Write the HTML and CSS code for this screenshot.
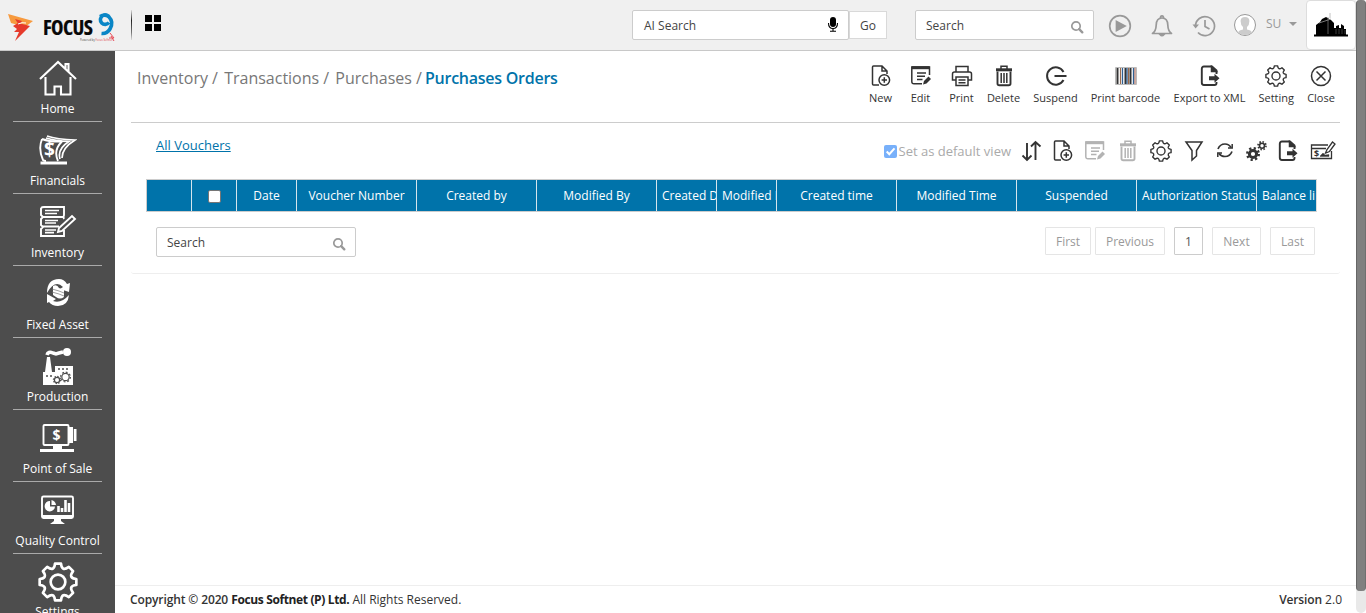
FILE: index.html
```html
<!DOCTYPE html>
<html lang="en">
<head>
<meta charset="utf-8">
<title>Purchases Orders</title>
<link rel="stylesheet" href="styles.css">
</head>
<body>
<svg class="sprite" aria-hidden="true">
  <symbol id="gear" viewBox="-12 -12 24 24"><path d="M-1.8-11H1.8Q2-8.500 3.200-7.960Q4.400-7.500 6.500-9.050L9.050-6.500Q7.500-4.400 7.960-3.200Q8.500-2 11-1.800V1.800Q8.500 2 7.960 3.200Q7.500 4.400 9.050 6.500L6.500 9.050Q4.400 7.500 3.200 7.960Q2 8.500 1.800 11H-1.800Q-2 8.500-3.200 7.960Q-4.400 7.500-6.500 9.050L-9.050 6.500Q-7.500 4.400-7.960 3.200Q-8.500 2-11 1.800V-1.800Q-8.500-2-7.960-3.200Q-7.500-4.400-9.050-6.500L-6.500-9.050Q-4.400-7.500-3.200-7.960Q-2-8.500-1.800-11Z" stroke-linejoin="round"/><circle r="4.4"/></symbol>
  <symbol id="new" viewBox="0 0 20 22"><path d="M8 20H2.500Q1.500 20 1.500 19V2Q1.500 1 2.500 1H11L16 6V9M11 1V6H16"/><circle cx="13.300" cy="15" r="5.300"/><path d="M13.300 12.300V17.700M10.600 15H16"/></symbol>
  <symbol id="edit" viewBox="0 0 22 22"><path d="M12 18.800H4Q1.800 18.800 1.800 16.500V2H19.500V10"/><path d="M1.800 2.700H19.500" stroke-width="3"/><path d="M7 8H16M7 11.200H15M7 14.400H12.500"/><path d="M13 19.500L14 16L18.500 11.500L21 14L16.500 18.500Z" fill="currentColor" stroke="none"/></symbol>
  <symbol id="trash" viewBox="0 0 20 22"><path d="M2 4.800H18" stroke-width="3"/><path d="M7 4V1.300H13V4"/><path d="M3.500 6.500V18.500Q3.500 20.300 5.300 20.300H14.700Q16.500 20.300 16.500 18.500V6.500" stroke-width="1.900"/><path d="M7.200 8V18M10 8V18M12.800 8V18"/></symbol>
  <symbol id="export" viewBox="0 0 20 22"><path d="M16.500 9V5.500L12 1.500H4Q1.800 1.500 1.800 3.700V17.800Q1.800 20 4 20H14.500Q16.500 20 16.500 18V17" stroke-width="1.900"/><path d="M11.500 1.500L16.500 6.500H11.500Z" fill="currentColor"/><path d="M9 11.300H14.500V8.800L19.500 13.300L14.500 17.700V15.200H9Z" fill="currentColor" stroke="none"/></symbol>
  <symbol id="search" viewBox="0 0 14 14"><circle cx="6" cy="6" r="4.200"/><path d="M9.200 9.200L12.300 12.300" stroke-width="2.400" stroke-linecap="round"/></symbol>
</svg>
<div class="window">
  <div class="app">
    <header class="topbar">
      <svg class="logo" width="110" height="36" viewBox="0 0 110 36">
        <path d="M0 5L25 12L17 18L3 14Z" fill="#f79a3e"/><path d="M5 17L10 14L22 17L7 32L11 23H6L9 20Z" fill="#e63a2b"/><path d="M7 10L14 12L11 16Z" fill="#e63a2b"/><path d="M10 15Q14 13 18 14" stroke="#fff" fill="none"/>
        <text class="logo-word" x="35" y="25.500" textLength="50" lengthAdjust="spacing">FOCUS</text>
        <path d="M101 13.500A4.800 4.800 0 1 1 101.500 8.500M92 7.500Q97 4.500 101 8Q106 13 102 20Q99 25 93.500 24.500" fill="none" stroke="#0a86c6" stroke-width="3.600"/>
        <path d="M102 24L106 29L101 29M103 27L106 32" stroke="#e84b55" fill="none"/>
        <text class="logo-tag" x="72" y="32">Powered by<tspan fill="#e0424c"> Focus Softnet</tspan></text>
      </svg>
      <i class="logo-rule"></i>
      <div class="apps"><i></i><i></i><i></i><i></i></div>
      <label class="field ai"><span>AI Search</span>
        <svg width="14" height="18" viewBox="0 0 14 18"><rect x="4" y="1" width="6" height="10" rx="3"/><path d="M2.500 7Q2.500 12.500 7 12.500Q11.500 12.500 11.500 7M7 12.500V15M4 15.200H10" fill="none" stroke="#000" stroke-width="1.100"/></svg>
      </label>
      <button class="go">Go</button>
      <label class="field global"><span>Search</span><svg class="line mag" width="14" height="14"><use href="#search"/></svg></label>
      <nav class="tools">
        <svg width="24" height="24" viewBox="0 0 24 24"><circle cx="12" cy="12" r="10.300"/><path d="M8.500 7.500L17 12L8.500 16.500Z" fill="#999"/></svg>
        <svg width="22" height="24" viewBox="0 0 22 24"><path d="M1.500 19.500Q5 17 5.200 11Q5.400 4 11 4Q16.600 4 16.800 11Q17 17 20.500 19.500Z" stroke-linejoin="round"/><path d="M9.500 4Q9.500 1.800 11 1.800Q12.500 1.800 12.500 4"/><path d="M9 20.500Q11 23 13 20.500Z" fill="#999"/></svg>
        <svg width="24" height="24" viewBox="0 0 24 24"><path d="M3.500 12A9.500 9.500 0 1 1 6 18.500M13 6V12.500L17.500 15"/><path d="M0.500 10.500H7L3.600 14.500Z" fill="#999" stroke="none"/></svg>
      </nav>
      <svg class="avatar" width="24" height="24" viewBox="0 0 24 24"><circle cx="12" cy="12" r="10.500" fill="#fff" stroke="#999"/><path d="M5 19.500Q6 17.200 10 16.500V14Q7.600 12 7.600 8Q7.700 4 12 4Q16.300 4 16.400 8Q16.400 12 14 14V16.500Q18 17.200 19 19.500Q16 22 12 22Q8 22 5 19.500Z" fill="#ccc"/></svg>
      <span class="user">SU</span><i class="caret"></i>
      <div class="company"><svg width="34" height="26" viewBox="0 0 34 26"><path d="M2 23V13L6 10L8 7L12 5L17 8L20 11V16H22V14L25 13V16H27V12L30 14V17H32V23Z"/><path d="M0 23.500H34" stroke="#000" stroke-width="2"/><path d="M5 11L17 7" stroke="#aaa" stroke-width=".7"/><path d="M14 5V22M16 1V6" stroke="#999" stroke-width=".6"/><path d="M22 17V22M25 17V22M28 17V22M31 18V22" stroke="#777" stroke-width=".5"/></svg></div>
    </header>
    <div class="body">
      <aside class="sidebar">
        <a><svg class="home" width="38" height="38" viewBox="0 0 38 38"><path d="M1 20L19 3L37 20M26.500 10V5H29.500V13M6.500 18V35.500H15.500V27.500H22V35.500H31.500V18"/></svg><span>Home</span></a>
        <a><svg width="38" height="38" viewBox="0 0 38 38"><path d="M3 8Q-1 18 4 29Q5 30 7 30M3 8Q11 11 23 10.500M23 10.500Q14 19 19 30"/><path d="M8 5Q18 8.500 36 9Q23 17 23 27M7 7Q16 10 30 10.500Q18 18 21 28" stroke-width="1.700"/><path d="M1.500 32H28" stroke-width="3"/><text x="5" y="25" class="money">$</text></svg><span>Financials</span></a>
        <a><svg width="38" height="38" viewBox="0 0 38 38"><path d="M2 5Q3 4 5 4H25V12Q24 14 25 16M2 5V12L4 14L2 16V22L4 24L2 26V33H25V27M3 14H25M3 23.500H20"/><path d="M6 7.500H20M6 10.500H18M6 17.500H19M6 20H17M6 27H17M6 29.700H15" stroke-width="1.700"/><path d="M19 29L20 25L33 13L36 16L23 28Z"/></svg><span>Inventory</span></a>
        <a><svg width="38" height="38" viewBox="0 0 38 38"><path d="M8 18Q8 4 20 4Q25 4 28 9L31 8L30 17L21 14L24 12Q16 4 8 18Z" fill="#fff" stroke="none"/><path d="M30 20Q29 31 19 31Q13 31 10 27L8 28L8 19L17 24L14 26Q22 29 30 20Z" fill="#fff" stroke="none"/><path d="M14 11Q18 9 20 13L25 15V22Q21 25 17 22L14 20Z" fill="#fff" stroke="none"/><path d="M13 14L20 16L25 18M13 17L20 19L25 21" stroke="#777" stroke-width=".7"/></svg><span>Fixed Asset</span></a>
        <a><svg width="38" height="38" viewBox="0 0 38 38"><path d="M4 25H6L8 10H11L13 25H16V19H34V38H4Z" fill="#fff" stroke="none"/><path d="M8 8Q9 4 14 6L17 7L20 6L24 5" stroke-width="3.500"/><circle cx="28" cy="5" r="4" fill="#fff" stroke="none"/><path d="M7 29H14M19 22H31" stroke="#4d4d4d" stroke-width="1.300" stroke-dasharray="2 2"/><g stroke="#4d4d4d" stroke-width="1.200" fill="none"><circle cx="18" cy="33" r="2.600"/><circle cx="18" cy="33" r="3.600" stroke-dasharray="1.400 1.400"/><circle cx="26.500" cy="30" r="3.700"/><circle cx="26.500" cy="30" r="4.900" stroke-dasharray="1.900 1.900"/></g></svg><span>Production</span></a>
        <a><svg width="38" height="38" viewBox="0 0 38 38"><rect x="4.500" y="6" width="25" height="20" rx="1"/><path d="M14 27H23V31H14ZM1 30H35V33H1ZM30 8H34V24H30ZM34.800 10H37.500V22H34.800Z" fill="#fff" stroke="none"/><text x="13.500" y="21" class="coin">$</text></svg><span>Point of Sale</span></a>
        <a><svg width="38" height="38" viewBox="0 0 38 38"><rect x="3" y="5.500" width="31" height="21.500" rx="1.500"/><path d="M3 25.500H34" stroke-width="3"/><path d="M15 28H22V30L26 33H11L15 30Z" fill="#fff" stroke="none"/><path d="M11 10A5.200 5.200 0 1 0 16 15.500H11Z" fill="#fff" stroke="none"/><path d="M12.500 9V14H17Q16.500 10 12.500 9Z" fill="#fff" stroke="none"/><path d="M19.500 21V15M23 21V17M26.500 21V9M30 21V12" stroke-width="2.600"/></svg><span>Quality Control</span></a>
        <a><svg class="settings" width="40" height="40"><use href="#gear"/></svg><span>Settings</span></a>
      </aside>
      <main class="content">
        <section class="heading">
          <h1>Inventory / <span>Transactions /</span> <span>Purchases</span> /<b>Purchases Orders</b></h1>
          <nav class="actions">
            <a><svg width="20" height="22"><use href="#new"/></svg>New</a>
            <a><svg width="22" height="22"><use href="#edit"/></svg>Edit</a>
            <a><svg width="22" height="22" viewBox="0 0 22 22"><path d="M5 7V1.500H17V7M4.500 15H1.500V9Q1.500 7 3.500 7H18.500Q20.500 7 20.500 9V15H17.500M5 12H17V20.500H5ZM7.500 15H14.500M7.500 17.700H14.500"/></svg>Print</a>
            <a><svg width="20" height="22"><use href="#trash"/></svg>Delete</a>
            <a><svg width="22" height="22" viewBox="0 0 22 22"><path d="M18.500 7A8.700 8.700 0 1 0 18.500 15M9.500 11H21.500" stroke-width="2"/></svg>Suspend</a>
            <a><svg width="22" height="22" viewBox="0 0 22 22"><path d="M.5 2.500H21.500V19.500H.5Z" stroke="#bbb" stroke-width="1"/><path d="M2.500 3V19M10.500 3V19M15.500 3V19" stroke="#333" stroke-width="2"/><path d="M5.500 3V19M13.500 3V19" stroke="#9a6a4c" stroke-width="1.200"/><path d="M7.500 3V19M12 3V19M18.500 3V19" stroke="#2f5f92" stroke-width="1.300"/><path d="M20 3V19" stroke="#995443" stroke-width="1"/></svg>Print barcode</a>
            <a><svg width="20" height="22"><use href="#export"/></svg>Export to XML</a>
            <a><svg width="22" height="22"><use href="#gear"/></svg>Setting</a>
            <a><svg width="22" height="22" viewBox="0 0 22 22"><circle cx="11" cy="11" r="9.500"/><path d="M6.500 6.500L15.500 15.500M15.500 6.500L6.500 15.500"/></svg>Close</a>
          </nav>
        </section>
        <section class="card">
          <div class="views">
            <a class="all">All Vouchers</a>
            <span class="default"><i><svg width="13" height="13" viewBox="0 0 13 13"><path d="M2.700 6.500L5.300 9.200L10.500 3.300"/></svg></i>Set as default view</span>
            <nav class="icons">
              <a><svg width="22" height="22" viewBox="0 0 22 22"><path d="M6 3V20M1.500 15.500L6 20L10.500 15.500M14.500 20V2M10 6.500L14.500 2L19.500 6.500" stroke-width="1.900"/></svg></a>
              <a><svg width="20" height="22"><use href="#new"/></svg></a>
              <a class="off"><svg width="22" height="22"><use href="#edit"/></svg></a>
              <a class="off"><svg width="20" height="22"><use href="#trash"/></svg></a>
              <a><svg width="22" height="22"><use href="#gear"/></svg></a>
              <a><svg width="20" height="22" viewBox="0 0 20 22"><path d="M2 2H18L12.500 10.500V16L8 20V10.500Z"/></svg></a>
              <a><svg width="18" height="22" viewBox="0 0 18 22"><path d="M2 9Q4 4 9 4Q13 4 15 7.500M16 11.500Q14 16.500 9 16.500Q5 16.500 3 13.500" stroke-width="1.700"/><path d="M12 8H16.200V4M6 13H1.800V17" /></svg></a>
              <a><svg width="22" height="22" viewBox="0 0 22 22"><circle cx="8" cy="14" r="3.600" stroke-width="3"/><circle cx="8" cy="14" r="5.800" stroke-width="2.400" stroke-dasharray="2.200 2.355"/><circle cx="17" cy="5.700" r="2.500" stroke-width="1.600"/><circle cx="17" cy="5.700" r="4" stroke-width="1.600" stroke-dasharray="1.500 1.640"/></svg></a>
              <a><svg width="20" height="22"><use href="#export"/></svg></a>
              <a><svg width="26" height="22" viewBox="0 0 26 22"><path d="M18 5H1.500V18.500H21.500V11M1.500 8.500H16" stroke-width="1.300"/><path d="M15.500 13L17 9.500L22.500 2L25 4L19.500 11.500Z" stroke-width="1.300"/><path d="M10 16L13 13L15 15L19 14.500V16.500H10" fill="currentColor" stroke-width=".4"/><text x="4" y="16.500" class="cheque">$</text></svg></a>
            </nav>
          </div>
          <div class="grid">
            <div></div><div><i class="box"></i></div><div>Date</div><div>Voucher Number</div><div>Created by</div><div>Modified By</div><div class="cut">Created Date</div><div class="cut">Modified Date</div><div>Created time</div><div>Modified Time</div><div>Suspended</div><div class="cut">Authorization Status</div><div class="cut">Balance linked</div>
          </div>
          <div class="below">
            <label class="field filter"><span>Search</span><svg class="line mag" width="14" height="14"><use href="#search"/></svg></label>
            <nav class="pager"><a class="first">First</a><a class="prev">Previous</a><a class="page">1</a><a class="next">Next</a><a class="last">Last</a></nav>
          </div>
        </section>
        <footer class="footer"><span><b class="med">Copyright © 2020</b> <b>Focus Softnet (P) Ltd.</b> All Rights Reserved.</span><span><b class="med">Version</b> 2.0</span></footer>
      </main>
    </div>
  </div>
  <div class="scroll"><i></i></div>
</div>
</body>
</html>
```
FILE: styles.css
```css
* { box-sizing: border-box; }
body { margin: 0; font: 12px/18px "Open Sans", "Noto Sans", sans-serif; color: #333; background: #fff; overflow: hidden; }
svg { display: block; flex: none; }
i { display: block; flex: none; font-style: normal; }
.sprite { position: absolute; width: 0; height: 0; }
.window { display: flex; height: 613px; overflow: hidden; }
.app { display: flex; flex-direction: column; width: 1356px; height: 613px; }
.scroll { width: 10px; background: #e9e9e9; border-radius: 5px; }
.scroll i { height: 591px; background: #808080; border-left: 1px solid #666; border-right: 1px solid #707070; border-radius: 4px; }

/* Top bar */
.topbar { display: flex; align-items: flex-start; height: 51px; flex: none; background: #f0f0f0; border-bottom: 1px solid #c8c8c8; padding-left: 8px; }
.logo { margin-top: 9px; }
.logo-word { font: 700 21px "Open Sans", sans-serif; font-stretch: 75%; fill: #080808; stroke: #080808; stroke-width: .2px; }
.logo-tag { font: 2.700px "Open Sans", sans-serif; fill: #444; }
.logo-rule { width: 1px; height: 30px; margin: 10px 0 0 13px; background: linear-gradient(#ddd, #222 35%, #777 75%, #ddd); }
.apps { display: grid; grid-template-columns: 7px 7px; grid-auto-rows: 7px; gap: 2px; margin: 15px 0 0 13px; }
.apps i { background: #000; }
.field { display: flex; align-items: center; justify-content: space-between; height: 30px; padding: 1px 9px 0 10px; background: #fff; border: 1px solid #ccc; border-radius: 2px; color: #444; }
.field span { padding-top: 1px; }
.ai { width: 217px; margin: 10px 0 0 471px; padding: 0 8px 0 11px; }
.ai span { padding-top: 2px; }
.go { width: 38px; height: 28px; margin-top: 11px; padding: 2px 0 0; border: 1px solid #d9d9d9; background: #fff; color: #444; font: inherit; }
.global { width: 179px; margin: 10px 0 0 28px; }
.line, .tools svg { fill: none; stroke: #999; stroke-width: 1.700; }
.mag { position: relative; top: 1px; }
.tools { display: flex; gap: 19px; margin: 14px 0 0 14px; }
.avatar { margin: 13px 0 0 17px; }
.user { margin: 15px 0 0 9px; color: #999; }
.caret { margin: 22px 0 0 8px; border: 4px solid transparent; border-top-color: #999; border-bottom: 0; }
.company { display: flex; align-items: center; justify-content: center; width: 50px; height: 50px; margin-left: auto; border: 1px solid #ddd; border-radius: 4px; background: #fff; }

/* Sidebar */
.body { display: flex; flex: 1; min-height: 0; }
.sidebar { width: 115px; flex: none; overflow: hidden; background: #4d4d4d; color: #fff; }
.sidebar a { display: flex; flex-direction: column; align-items: center; height: 72px; margin: 0 13px; padding-top: 9px; border-bottom: 1px solid #aaa; font-size: 12px; white-space: nowrap; }
.sidebar a:first-child { height: 71px; padding-top: 8px; }
.sidebar svg { fill: none; stroke: #fff; stroke-width: 1.900; }
.sidebar .home { stroke-width: 2.100; }
.sidebar .settings { stroke-width: 1.600; }
.sidebar span { margin-top: 3px; }
.sidebar a:last-child { padding-top: 8px; }
.sidebar a:last-child span { margin-top: 1px; }
.money { font: 700 19px "Open Sans", sans-serif; fill: #fff; stroke: none; }
.coin { font: 700 14px "Open Sans", sans-serif; fill: #fff; stroke: none; }

/* Page heading */
.content { display: flex; flex-direction: column; flex: 1; min-width: 0; }
.heading { display: flex; justify-content: space-between; height: 72px; margin: 0 16px 0 16px; padding-left: 6px; border-bottom: 1px solid #ccc; }
h1 { margin: 16px 0 0; font-size: 16px; font-weight: 400; line-height: 22px; color: #777; white-space: pre; }
h1 span { margin-left: 2px; }
h1 b { margin-left: 3px; color: #0073aa; font-weight: 600; letter-spacing: -.25px; }
.actions { display: grid; grid-template-columns: 36px 44px 38px 46px 58px 82px 86px 47.500px 42px; margin-right: -2px; padding-top: 14px; font-size: 11px; white-space: nowrap; }
.actions a { display: flex; flex-direction: column; align-items: center; gap: 2px; }
.actions svg, .icons svg { fill: none; stroke: currentColor; stroke-width: 1.500; }

/* Voucher list */
.card { height: 151px; margin: 0 16px; border-bottom: 1px solid #eee; border-radius: 3px; }
.views { display: flex; height: 56px; padding-left: 25px; }
.all { margin-top: 13px; font-size: 13px; color: #0073aa; text-decoration: underline; text-underline-offset: 1px; }
.default { display: flex; align-items: center; gap: 2px; height: 20px; margin: 18px 4px 0 auto; font-size: 13px; color: #aaa; white-space: nowrap; }
.default i { width: 13px; height: 13px; border-radius: 2px; background: #78b0fa; }
.default path { fill: none; stroke: #fff; stroke-width: 2; }
.icons { display: grid; grid-template-columns: 34px 28px 36px 30px 36px 30px 32px 30px 34px 35px; height: 22px; margin-top: 17px; }
.icons a { display: flex; justify-content: center; }
.off { color: #b3b3b3; }
.cheque { font: 700 9px "Open Sans", sans-serif; fill: #333; stroke: none; }
.grid { display: grid; grid-template-columns: 45px 45px 60px 120px 120px 120px 60px 60px 120px 120px 120px 120px 60px; width: 1171px; height: 33px; margin-left: 15px; overflow: hidden; border: 1px solid #ccc; border-right-color: #ddd; color: #fff; background: #0073aa; }
.grid div { display: flex; align-items: center; justify-content: center; min-width: 0; overflow: hidden; padding-top: 1px; border-right: 1px solid #d5e5ed; font-size: 12px; white-space: nowrap; }
.grid .cut { justify-content: flex-start; padding-left: 5px; }
.box { width: 13px; height: 13px; background: #fff; border: 1px solid #767676; border-radius: 2px; }
.below { display: flex; justify-content: space-between; padding: 15px 25px 0 25px; }
.filter { width: 200px; }
.pager { display: flex; height: 28px; color: #999; }
.pager a { display: flex; align-items: center; justify-content: center; border: 1px solid #e5e5e5; border-radius: 1px; padding-top: 1px; }
.first { width: 46px; }
.prev { width: 70px; margin-left: 4px; }
.page { width: 29px; margin-left: 9px; color: #555; }
.pager .page { border-color: #ccc; }
.next { width: 49px; margin-left: 9px; }
.last { width: 45px; margin-left: 9px; }

/* Footer */
.footer { display: flex; justify-content: space-between; height: 28px; margin-top: auto; padding: 5px 14px 0 15px; border-top: 1px solid #eee; }
.footer b { font-weight: 700; color: #222; letter-spacing: -.37px; }
.footer .med { font-weight: 600; color: #333; letter-spacing: -.12px; }
```
